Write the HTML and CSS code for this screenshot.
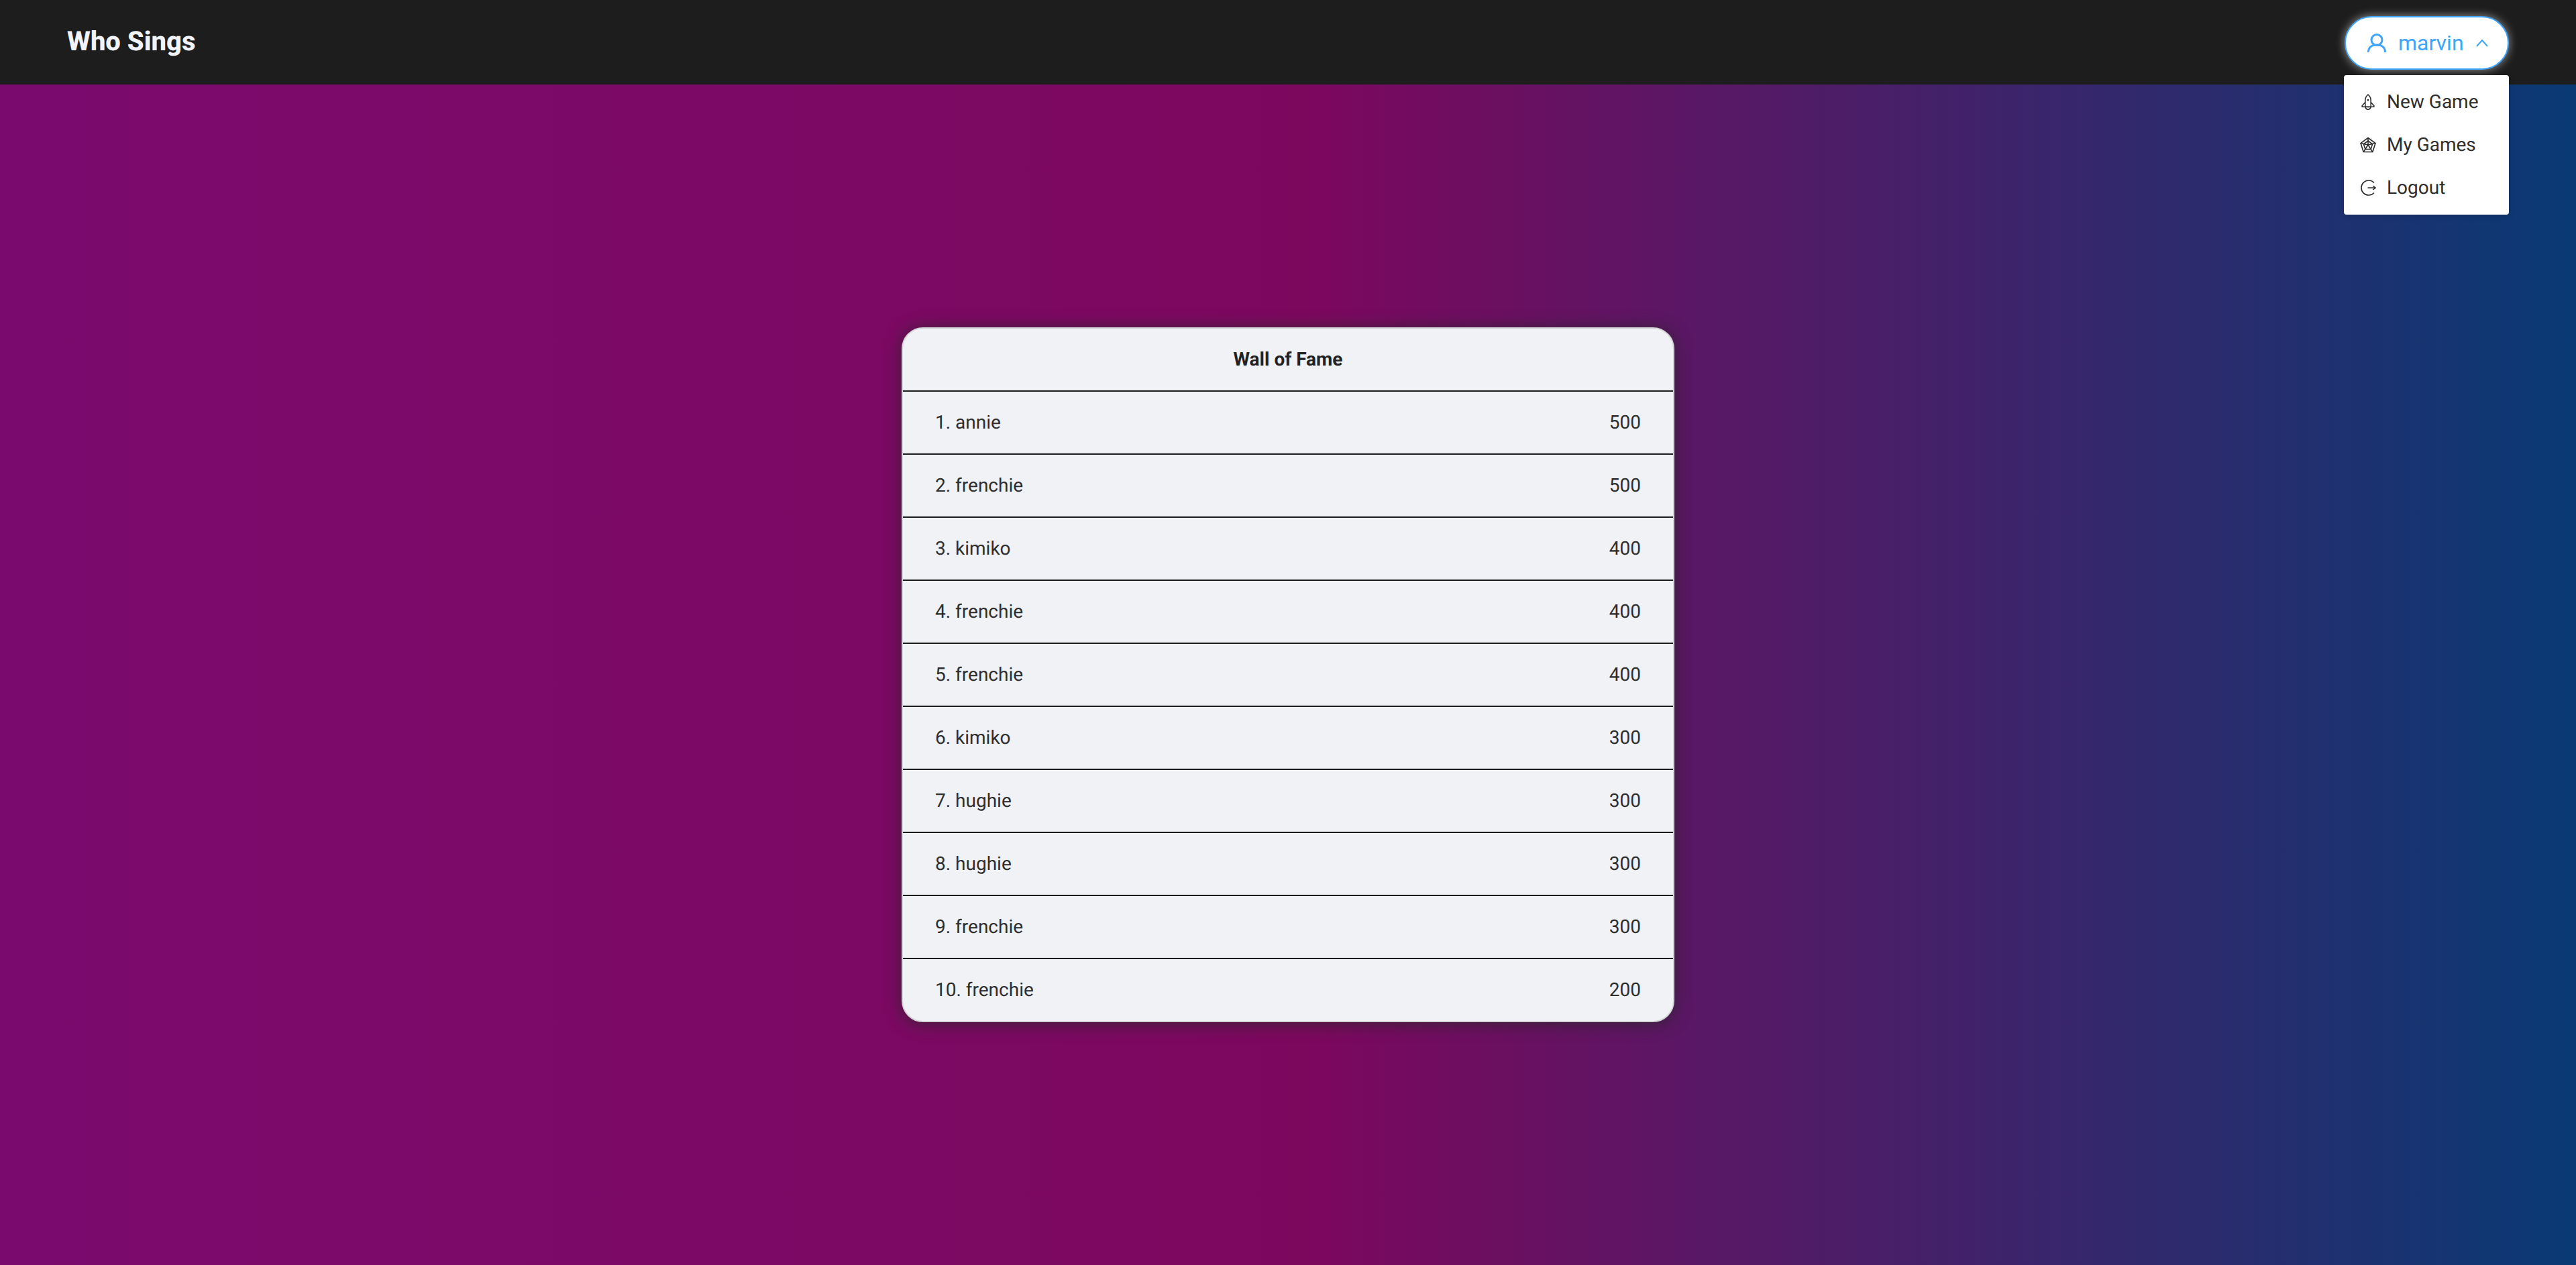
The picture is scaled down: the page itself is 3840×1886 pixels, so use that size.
FILE: index.html
```html
<!DOCTYPE html>
<html lang="en">
<head>
    <meta charset="UTF-8">
    <title>Who Sings</title>
    <link rel="stylesheet" href="styles.css">
</head>
<body>
    <header class="topbar">
        <div class="brand">Who Sings</div>
        <div class="user-menu">
            <button class="user-button">
                <svg class="user-icon" viewBox="0 0 28 28"><circle cx="14" cy="9.500" r="8"/><path d="M1.500 28c0-7.500 5-11 12.500-11s12.500 3.500 12.500 11"/></svg>
                <span>marvin</span>
                <svg class="chevron" viewBox="0 0 18 12"><path d="M1 11l8-9 8 9"/></svg>
            </button>
            <nav class="dropdown">
                <a class="dropdown-item">
                    <svg class="item-icon" viewBox="0 0 24 24"><path d="M12 1C9 3.500 7.800 6.500 7.800 9.500v10h8.400v-10C16.200 6.500 15 3.500 12 1z"/><path d="M7.800 12.500L3.200 17.500v1.800h17.600v-1.800l-4.600-5"/><path d="M8 19.300c0 2.200 1.800 3.600 4 4.200 2.200-.6 4-2 4-4.200"/><path class="thick" d="M12 8v2.500"/></svg>
                    New Game
                </a>
                <a class="dropdown-item">
                    <svg class="item-icon" viewBox="0 0 24 24"><path d="M12 1.500l11 8-4.200 13H5.200L1 9.500z"/><path d="M12 6l6.600 4.800-2.500 7.700H7.900l-2.500-7.700z"/><path d="M12 1.500L12 12M23 9.500L12 12M18.800 22.500L12 12M5.200 22.500L12 12M1 9.500L12 12"/></svg>
                    My Games
                </a>
                <a class="dropdown-item">
                    <svg class="item-icon" viewBox="0 0 24 24"><path d="M21 4.500a11 11 0 1 0 0 15"/><path d="M11.500 12H23M19.500 9L23 12l-3.500 3"/></svg>
                    Logout
                </a>
            </nav>
        </div>
    </header>

    <main class="content">
        <section class="card">
            <div class="row row-title">Wall of Fame</div>
            <div class="row"><span>1. annie</span><span>500</span></div>
            <div class="row"><span>2. frenchie</span><span>500</span></div>
            <div class="row"><span>3. kimiko</span><span>400</span></div>
            <div class="row"><span>4. frenchie</span><span>400</span></div>
            <div class="row"><span>5. frenchie</span><span>400</span></div>
            <div class="row"><span>6. kimiko</span><span>300</span></div>
            <div class="row"><span>7. hughie</span><span>300</span></div>
            <div class="row"><span>8. hughie</span><span>300</span></div>
            <div class="row"><span>9. frenchie</span><span>300</span></div>
            <div class="row"><span>10. frenchie</span><span>200</span></div>
        </section>
    </main>
</body>
</html>
```
FILE: styles.css
```css
* {
    box-sizing: border-box;
}
html, body {
    height: 100%;
}
body {
    margin: 0;
    display: flex;
    flex-direction: column;
    font-family: Roboto, "Liberation Sans", sans-serif;
    font-size: 28px;
    color: #2e2e2e;
    text-rendering: geometricPrecision;
    background: linear-gradient(90deg, #7b0a6e 0%, #7c085e 51%, #093a74 100%);
}
.topbar {
    height: 126px;
    flex: none;
    display: flex;
    align-items: flex-start;
    justify-content: space-between;
    padding: 24px 100px 0;
    background: #1d1d1d;
}
.brand {
    margin-top: 11px;
    font-size: 40px;
    font-weight: 800;
    line-height: 54px;
    color: #f1f3f8;
}
.user-menu {
    position: relative;
    width: 246px;
}
.user-button {
    width: 245px;
    height: 80px;
    margin-left: 1px;
    display: flex;
    align-items: center;
    padding: 0 32px;
    font-family: inherit;
    font-size: 32px;
    color: #3ea5fb;
    background: #fff;
    border: 2px solid #3ea5fb;
    border-radius: 40px;
    box-shadow: 0 0 14px rgba(255, 255, 255, 0.55);
}
.user-icon {
    width: 28px;
    height: 28px;
    flex: none;
    margin-right: 18px;
    fill: none;
    stroke: #3ea5fb;
    stroke-width: 3;
}
.chevron {
    width: 18px;
    height: 12px;
    flex: none;
    margin-left: 18px;
    fill: none;
    stroke: #3ea5fb;
    stroke-width: 2;
}
.dropdown {
    position: absolute;
    top: 88px;
    left: 0;
    width: 246px;
    padding: 8px 0;
    background: #fff;
    border-radius: 4px;
    box-shadow: 0 2px 8px rgba(0, 0, 0, 0.15);
}
.dropdown-item {
    height: 64px;
    display: flex;
    align-items: center;
    padding-left: 24px;
    padding-bottom: 2px;
}
.item-icon {
    width: 24px;
    height: 24px;
    flex: none;
    margin-right: 16px;
    margin-top: 2px;
    fill: none;
    stroke: #2b2b2b;
    stroke-width: 1.6;
}
.thick {
    stroke-width: 2.4;
}
.content {
    flex: 1;
    display: flex;
    align-items: center;
    justify-content: center;
}
.card {
    width: 1152px;
    background: #f0f2f6;
    border: 2px solid #d4d4d6;
    border-radius: 32px;
    box-shadow: 0 2px 24px rgba(40, 40, 40, 0.8);
}
.row {
    height: 94px;
    display: flex;
    align-items: center;
    justify-content: space-between;
    padding: 0 48px 2px;
    border-bottom: 2px solid #1c1c1c;
}
.row:last-child {
    height: 92px;
    border-bottom: none;
}
.row-title {
    justify-content: center;
    font-weight: 700;
    color: #222;
}
```
